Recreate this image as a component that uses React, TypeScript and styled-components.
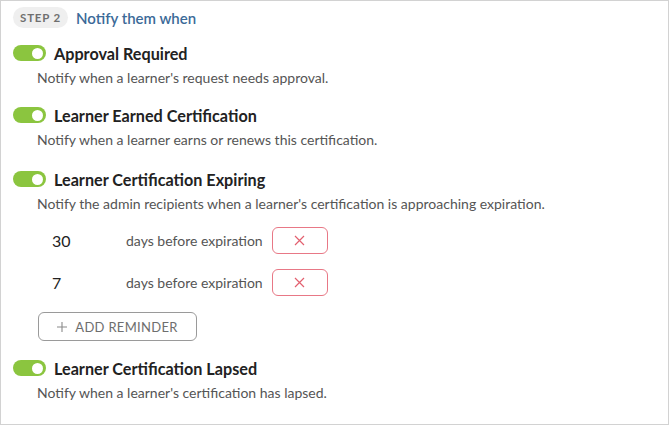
import React from 'react'
import styled, { createGlobalStyle } from 'styled-components'

const GlobalStyle = createGlobalStyle`
  html, body {
    margin: 0;
    padding: 0;
    background: #fff;
  }
  body {
    font-family: Lato, "Noto Sans", sans-serif;
    color: #222;
  }
`

const Frame = styled.div`
  box-sizing: border-box;
  width: 669px;
  height: 425px;
  border: 1px solid #d2d2d2;
  padding: 6px 0 0 12px;
  display: flex;
  flex-direction: column;
`

const Header = styled.div`
  display: flex;
  align-items: center;
  gap: 8px;
  height: 21px;
`

const StepBadge = styled.span`
  display: inline-flex;
  align-items: center;
  justify-content: center;
  height: 21px;
  width: 55px;
  border-radius: 11px;
  background: #efefef;
  color: #6f6f6f;
  font-size: 11.5px;
  font-weight: 700;
  letter-spacing: 0.8px;
`

const HeaderTitle = styled.span`
  color: #3b6a98;
  font-size: 15px;
  font-weight: 600;
`

const Section = styled.div<{ $top: number }>`
  margin-top: ${p => p.$top}px;
  display: flex;
  flex-direction: column;
`

const TitleRow = styled.div`
  display: flex;
  align-items: center;
  gap: 8px;
  height: 20px;
`

const Toggle = styled.span`
  position: relative;
  width: 33px;
  height: 16px;
  border-radius: 8px;
  background: #8bc53f;
  flex-shrink: 0;
  &::after {
    content: '';
    position: absolute;
    right: 3px;
    top: 2.5px;
    width: 11px;
    height: 11px;
    border-radius: 50%;
    background: #fff;
  }
`

const Title = styled.span`
  font-size: 16.2px;
  font-weight: 700;
  color: #222;
`

const Desc = styled.div`
  margin: 5px 0 0 24px;
  font-size: 14px;
  line-height: 20px;
  color: #555;
`

const Reminders = styled.div`
  margin: 13px 0 0 39px;
  display: flex;
  flex-direction: column;
  gap: 16px;
`

const ReminderRow = styled.div`
  display: flex;
  align-items: center;
  height: 26px;
`

const Days = styled.span`
  width: 74px;
  font-size: 16px;
  color: #222;
`

const DaysLabel = styled.span`
  font-size: 14px;
  color: #555;
  margin-right: 9px;
`

const RemoveButton = styled.button`
  box-sizing: border-box;
  width: 56px;
  height: 27px;
  border: 1px solid #e87886;
  border-radius: 6px;
  background: #fff;
  display: flex;
  align-items: center;
  justify-content: center;
  padding: 0;
`

const AddButton = styled.button`
  box-sizing: border-box;
  margin: 17px 0 0 25px;
  width: 159px;
  height: 29px;
  border: 1px solid #9a9a9a;
  border-radius: 6px;
  background: #fff;
  display: flex;
  align-items: center;
  justify-content: center;
  gap: 8px;
  font-family: Lato, "Noto Sans", sans-serif;
  font-size: 13px;
  letter-spacing: 0.3px;
  color: #6e6e6e;
`

const Cross = () => (
  <svg width="11" height="11" viewBox="0 0 11 11">
    <path d="M1 1L10 10M10 1L1 10" stroke="#e2606f" strokeWidth="1.2" fill="none" />
  </svg>
)

const Plus = () => (
  <svg width="10" height="10" viewBox="0 0 10 10">
    <path d="M5 0V10M0 5H10" stroke="#8a8a8a" strokeWidth="1.1" fill="none" />
  </svg>
)

const reminders = [30, 7]

function App() {
  return (
    <>
      <GlobalStyle />
      <Frame>
        <Header>
          <StepBadge>STEP 2</StepBadge>
          <HeaderTitle>Notify them when</HeaderTitle>
        </Header>

        <Section $top={15}>
          <TitleRow>
            <Toggle />
            <Title>Approval Required</Title>
          </TitleRow>
          <Desc>Notify when a learner's request needs approval.</Desc>
        </Section>

        <Section $top={17}>
          <TitleRow>
            <Toggle />
            <Title>Learner Earned Certification</Title>
          </TitleRow>
          <Desc>Notify when a learner earns or renews this certification.</Desc>
        </Section>

        <Section $top={19}>
          <TitleRow>
            <Toggle />
            <Title>Learner Certification Expiring</Title>
          </TitleRow>
          <Desc>Notify the admin recipients when a learner's certification is approaching expiration.</Desc>
          <Reminders>
            {reminders.map(d => (
              <ReminderRow key={d}>
                <Days>{d}</Days>
                <DaysLabel>days before expiration</DaysLabel>
                <RemoveButton>
                  <Cross />
                </RemoveButton>
              </ReminderRow>
            ))}
          </Reminders>
          <AddButton>
            <Plus />
            ADD REMINDER
          </AddButton>
        </Section>

        <Section $top={17}>
          <TitleRow>
            <Toggle />
            <Title>Learner Certification Lapsed</Title>
          </TitleRow>
          <Desc>Notify when a learner's certification has lapsed.</Desc>
        </Section>
      </Frame>
    </>
  )
}

export default App
